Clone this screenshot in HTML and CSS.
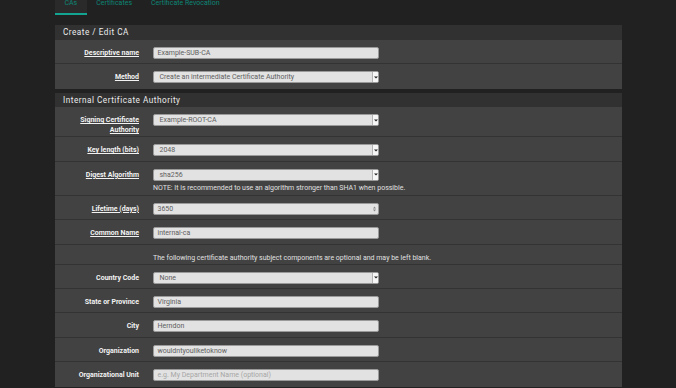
FILE: index.html
```html
<!DOCTYPE html>
<html lang="en">
<head>
    <meta charset="UTF-8">
    <meta name="viewport" content="width=device-width, initial-scale=1.0">
    <title>Create / Edit CA</title>
    <link rel="stylesheet" href="styles.css">
</head>
<body>
    <div class="page">
        <ul class="tabs">
            <li class="tab active">CAs</li>
            <li class="tab">Certificates</li>
            <li class="tab">Certificate Revocation</li>
        </ul>

        <div class="panel">
            <div class="panel-heading">Create / Edit CA</div>
            <div class="row">
                <label class="label linked">Descriptive name</label>
                <div class="control">
                    <div class="input">Example-SUB-CA</div>
                </div>
            </div>
            <div class="row">
                <label class="label linked">Method</label>
                <div class="control">
                    <div class="select"><span class="value">Create an intermediate Certificate Authority</span><span class="caret"><svg width="4" height="3" viewBox="0 0 4 3"><path d="M0 0.5h4L2 2.5z" fill="#222"/></svg></span></div>
                </div>
            </div>
        </div>

        <div class="panel">
            <div class="panel-heading second">Internal Certificate Authority</div>
            <div class="row row-tall">
                <label class="label linked">Signing Certificate<br>Authority</label>
                <div class="control">
                    <div class="select"><span class="value">Example-ROOT-CA</span><span class="caret"><svg width="4" height="3" viewBox="0 0 4 3"><path d="M0 0.5h4L2 2.5z" fill="#222"/></svg></span></div>
                </div>
            </div>
            <div class="row">
                <label class="label linked">Key length (bits)</label>
                <div class="control">
                    <div class="select"><span class="value">2048</span><span class="caret"><svg width="4" height="3" viewBox="0 0 4 3"><path d="M0 0.5h4L2 2.5z" fill="#222"/></svg></span></div>
                </div>
            </div>
            <div class="row row-note">
                <label class="label linked">Digest Algorithm</label>
                <div class="control">
                    <div class="select"><span class="value">sha256</span><span class="caret"><svg width="4" height="3" viewBox="0 0 4 3"><path d="M0 0.5h4L2 2.5z" fill="#222"/></svg></span></div>
                    <p class="help">NOTE: It is recommended to use an algorithm stronger than SHA1 when possible.</p>
                </div>
            </div>
            <div class="row">
                <label class="label linked">Lifetime (days)</label>
                <div class="control">
                    <div class="input number"><span>3650</span><span class="spin"><svg width="3" height="6" viewBox="0 0 3 6"><path d="M0 2.4h3L1.5 0.6z M0 3.6h3L1.5 5.4z" fill="#888"/></svg></span></div>
                </div>
            </div>
            <div class="row">
                <label class="label linked">Common Name</label>
                <div class="control">
                    <div class="input">internal-ca</div>
                </div>
            </div>
            <div class="row row-text">
                <div class="label"></div>
                <div class="control wide">The following certificate authority subject components are optional and may be left blank.</div>
            </div>
            <div class="row">
                <label class="label">Country Code</label>
                <div class="control">
                    <div class="select"><span class="value">None</span><span class="caret"><svg width="4" height="3" viewBox="0 0 4 3"><path d="M0 0.5h4L2 2.5z" fill="#222"/></svg></span></div>
                </div>
            </div>
            <div class="row">
                <label class="label">State or Province</label>
                <div class="control">
                    <div class="input">Virginia</div>
                </div>
            </div>
            <div class="row">
                <label class="label">City</label>
                <div class="control">
                    <div class="input">Herndon</div>
                </div>
            </div>
            <div class="row">
                <label class="label">Organization</label>
                <div class="control">
                    <div class="input">wouldntyouliketoknow</div>
                </div>
            </div>
            <div class="row">
                <label class="label">Organizational Unit</label>
                <div class="control">
                    <div class="input placeholder">e.g. My Department Name (optional)</div>
                </div>
            </div>
        </div>
    </div>
</body>
</html>
```

FILE: styles.css
```css
body {
    margin: 0;
    background-color: #212121;
    font-family: Roboto, "Liberation Sans", sans-serif;
    font-size: 7px;
    color: #e6e6e6;
}

.page {
    width: 567px;
    margin-left: 55px;
}

.tabs {
    display: flex;
    list-style-type: none;
    margin: 0 0 10px;
    padding: 0;
    height: 15px;
}

.tab {
    height: 13px;
    padding: 0 9.5px;
    line-height: 7px;
    color: #0d8675;
}

.tab.active {
    background-color: #2a2a2a;
    border-bottom: 2px solid #13a391;
}

.panel {
    background-color: #424242;
    margin-bottom: 4.6px;
}

.panel-heading {
    height: 15px;
    padding-left: 8px;
    background-color: #313131;
    font-size: 8.2px;
    font-weight: 400;
    letter-spacing: 0.5px;
    line-height: 15px;
    color: #ececec;
}

.panel-heading.second {
    height: 14px;
    line-height: 14px;
}

.row {
    display: flex;
    align-items: flex-start;
    padding: 7px 0 4.4px;
    border-bottom: 1px solid #333333;
}

.row:last-child {
    border-bottom: none;
    padding-bottom: 5.4px;
}

.row-tall {
    padding-bottom: 1px;
}

.row-note {
    padding-bottom: 2px;
}

.row-text {
    padding: 8px 0 1px;
    line-height: 10px;
}

.label {
    width: 84px;
    flex-shrink: 0;
    padding-top: 1px;
    margin-right: 14px;
    text-align: right;
    font-weight: 700;
    line-height: 10px;
    color: #f2f2f2;
}

.label.linked {
    text-decoration: underline;
    text-underline-offset: 1px;
}

.control {
    width: 226px;
}

.control.wide {
    width: auto;
    color: #e0e0e0;
}

.input,
.select {
    box-sizing: border-box;
    height: 12px;
    background-color: #e2e2e2;
    border: 1px solid #9a9a9a;
    border-radius: 2px;
    line-height: 10px;
    color: #5e5e5e;
    white-space: nowrap;
    overflow: hidden;
}

.input {
    padding-left: 3.5px;
}

.input.placeholder {
    color: #a6a6a6;
}

.input.number {
    display: flex;
    justify-content: space-between;
}

.spin {
    display: flex;
    align-items: center;
    width: 8px;
    justify-content: center;
    height: 10px;
}

.select {
    display: flex;
    justify-content: space-between;
}

.select .value {
    padding-left: 5.5px;
}

.caret {
    display: flex;
    align-items: center;
    justify-content: center;
    width: 5px;
    height: 10px;
    background-color: #f7f7f7;
    border-left: 1px solid #b5b5b5;
}

.help {
    margin: 2px 0 0;
    line-height: 10px;
    white-space: nowrap;
    color: #e0e0e0;
}
```
